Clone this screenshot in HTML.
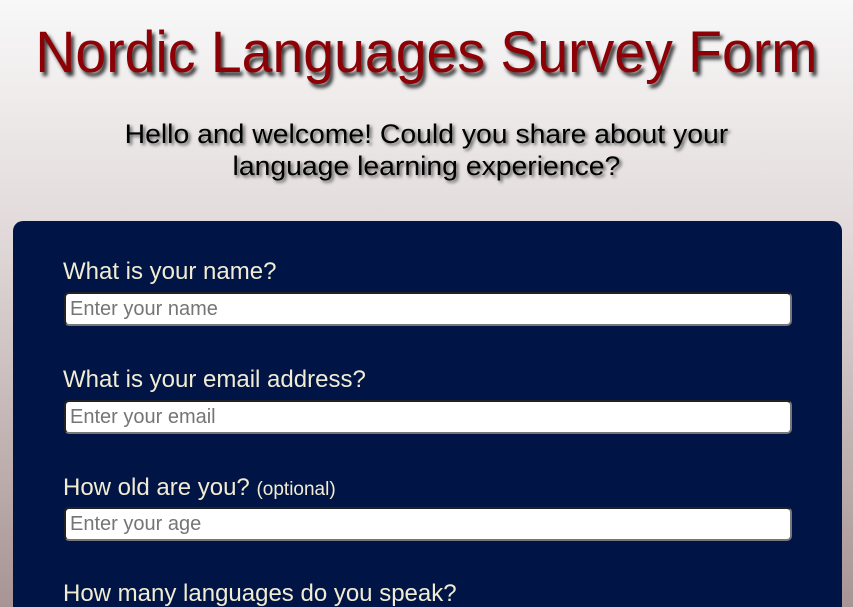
<!DOCTYPE html>
<html><head><style>
html,body{margin:0;padding:0;}
body{width:853px;height:607px;overflow:hidden;background:linear-gradient(#f8f8f8 0px,#e2dada 230px,#a89494 607px);font-family:"Liberation Sans",sans-serif;position:relative;}
h1{position:absolute;left:0;width:853px;top:20px;margin:0;text-align:center;font-weight:normal;font-size:58px;line-height:66px;color:#8d0005;text-shadow:3px 4px 4px #333;white-space:nowrap;}
h1 span{display:inline-block;transform:scaleX(0.955);}
.sub{position:absolute;left:0;width:853px;top:118px;text-align:center;font-size:27px;line-height:32px;color:#000;text-shadow:2px 2px 3px #555;white-space:nowrap;}
.sub span{display:inline-block;transform:scaleX(1.05);}
.card{position:absolute;left:13px;top:221px;width:829px;height:386px;background:#001546;border-radius:10px 10px 0 0;}
.lbl{position:absolute;left:63px;font-size:24px;line-height:26px;color:#f1ecd2;}
.lbl small{font-size:19px;}
.inp{position:absolute;left:64px;width:720px;height:30px;background:#fff;border:2px solid #222;border-bottom-color:#777;border-right-color:#777;border-radius:5px;font-size:20px;color:#757575;line-height:30px;padding-left:4px;box-sizing:content-box;}
</style></head><body>
<h1><span>Nordic Languages Survey Form</span></h1>
<div class="sub"><span>Hello and welcome! Could you share about your<br>language learning experience?</span></div>
<div class="card"></div>
<div class="lbl" style="top:259px">What is your name?</div>
<div class="inp" style="top:292px">Enter your name</div>
<div class="lbl" style="top:367px">What is your email address?</div>
<div class="inp" style="top:400px">Enter your email</div>
<div class="lbl" style="top:475px">How old are you? <small>(optional)</small></div>
<div class="inp" style="top:507px">Enter your age</div>
<div class="lbl" style="top:581px">How many languages do you speak?</div>
</body></html>
